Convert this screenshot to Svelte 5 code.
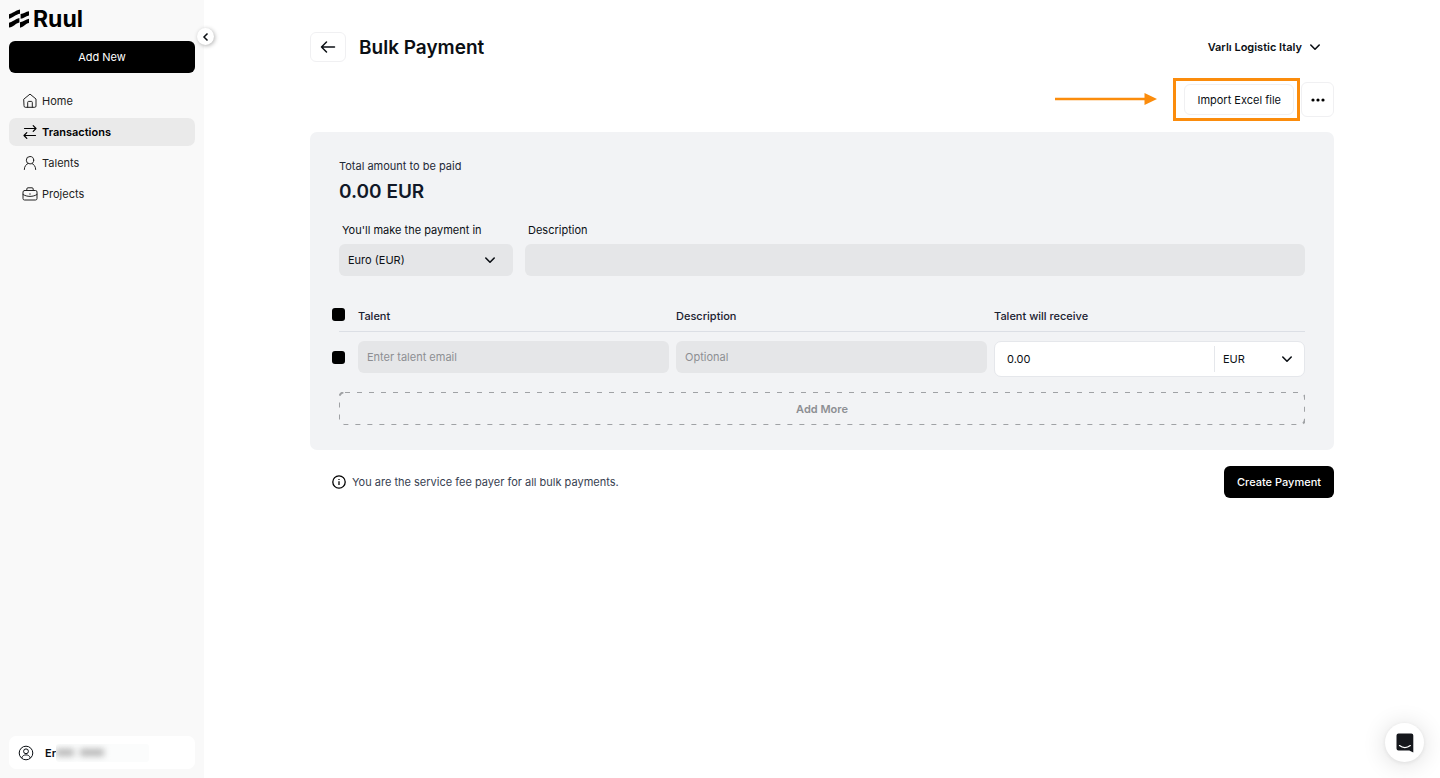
<script lang="ts">
	const navItems = [
		{ label: 'Home', icon: 'home', active: false },
		{ label: 'Transactions', icon: 'swap', active: true },
		{ label: 'Talents', icon: 'person', active: false },
		{ label: 'Projects', icon: 'briefcase', active: false }
	];

	const currencies = [
		{ code: 'EUR', name: 'Euro (EUR)' },
		{ code: 'USD', name: 'US Dollar (USD)' },
		{ code: 'GBP', name: 'British Pound (GBP)' }
	];

	let payCurrency = $state('EUR');
	let description = $state('');
	let rows = $state([{ id: 1, email: '', note: '', amount: '0.00', currency: 'EUR' }]);

	let total = $derived(rows.reduce((sum, row) => sum + (Number(row.amount) || 0), 0).toFixed(2));

	function addRow() {
		rows.push({ id: rows.length + 1, email: '', note: '', amount: '0.00', currency: payCurrency });
	}
</script>

{#snippet chevron()}
	<svg class="chevron" width="12" height="8" viewBox="0 0 12 8" aria-hidden="true">
		<path d="m1.800 2 4.200 4.200L10.200 2" />
	</svg>
{/snippet}

<div class="layout">
	<aside class="sidebar">
		<a class="logo" href="#home">
			<svg width="20" height="20" viewBox="0 0 20 20" aria-hidden="true">
				<path d="M0 5.200C4 4.600 6 1.500 11 .6v4.200C6.500 5.500 4.500 8.700 0 9.700Z" />
				<path d="M11.600 4.900C15 4.500 16.500 2.800 20 2.200v4.300c-3.500.6-5 2.800-8.400 3.300Z" />
				<path d="M0 13.700c4-.6 6-3.700 10.400-4.600v4.300C6.500 14.300 4.500 17.800 0 18.600Z" />
				<path d="M11 13.300c4-.7 5.500-3 9-3.600V14c-3.500.6-5 3.800-9 4.800Z" />
			</svg>
			<span>Ruul</span>
		</a>

		<button class="add-new" type="button">Add New</button>

		<nav>
			{#each navItems as item}
				<a href="#{item.icon}" class:active={item.active}>
					<svg width="16" height="16" viewBox="0 0 16 16" aria-hidden="true">
						{#if item.icon === 'home'}
							<path d="M2 6 8 1.100l6 4.900v7a1.300 1.300 0 0 1-1.300 1.300H3.300A1.300 1.300 0 0 1 2 13Z" />
							<path d="M5.700 14.300v-5q0-.9.9-.9h2.800q.9 0 .9.900v5" />
						{:else if item.icon === 'swap'}
							<path d="M2.500 4.500H14M11.200 1.700 14 4.500l-2.800 2.800M13.500 11.500H2M4.800 8.700 2 11.500l2.800 2.800" />
						{:else if item.icon === 'person'}
							<circle cx="8" cy="5.200" r="3.700" />
							<path d="M2.300 14.500C2.300 11 4.500 9.200 6 8.500M13.700 14.500c0-3.500-2.200-5.300-3.700-6" />
						{:else}
							<rect x="1" y="4.500" width="14" height="9.500" rx="1.500" />
							<path d="M4.800 4.500V3q0-1.200 1.200-1.200h4q1.200 0 1.200 1.200v1.500M1 8.500c4 2.600 10 2.600 14 0M7.700 8h.6" />
						{/if}
					</svg>
					{item.label}
				</a>
			{/each}
		</nav>

		<button class="user" type="button" aria-label="Account">
			<svg width="16" height="16" viewBox="0 0 16 16" aria-hidden="true">
				<circle cx="8" cy="8" r="6.800" />
				<circle cx="8" cy="6.300" r="2.400" />
				<path d="M3.700 13c.6-2.200 2.300-3.100 4.300-3.100s3.700.9 4.300 3.100" />
			</svg>
			<span class="name">Er</span>
			<span class="redacted"><i></i><i></i></span>
		</button>

		<button class="collapse" type="button" aria-label="Collapse sidebar">
			<svg width="8" height="10" viewBox="0 0 8 10" aria-hidden="true">
				<path d="M5.500 1.500 2 5l3.500 3.500" />
			</svg>
		</button>
	</aside>

	<main>
		<div class="content">
			<header>
				<button class="outlined back" type="button" aria-label="Back">
					<svg width="16" height="14" viewBox="0 0 16 14" aria-hidden="true">
						<path d="M14.500 7h-13M6.500 2l-5 5 5 5" />
					</svg>
				</button>
				<h1>Bulk Payment</h1>
				<button class="company" type="button">
					Varlı Logistic Italy
					{@render chevron()}
				</button>
			</header>

			<div class="toolbar">
				<div class="import">
					<svg class="arrow" width="102" height="12" viewBox="0 0 102 12" aria-hidden="true">
						<path d="M0 4.800h90v2.400H0zM89.500 0 102 6 89.500 12z" />
					</svg>
					<button class="outlined" type="button">Import Excel file</button>
				</div>
				<button class="outlined more" type="button" aria-label="More">
					<svg width="14" height="4" viewBox="0 0 14 4" aria-hidden="true">
						<circle cx="2" cy="2" r="1.600" />
						<circle cx="7" cy="2" r="1.600" />
						<circle cx="12" cy="2" r="1.600" />
					</svg>
				</button>
			</div>

			<section class="card">
				<p class="total-label">Total amount to be paid</p>
				<p class="total">{total} EUR</p>

				<div class="fields">
					<div class="field currency">
						<label for="pay-currency">You'll make the payment in</label>
						<div class="select">
							<select id="pay-currency" bind:value={payCurrency}>
								{#each currencies as c}
									<option value={c.code}>{c.name}</option>
								{/each}
							</select>
							{@render chevron()}
						</div>
					</div>
					<div class="field">
						<label for="description">Description</label>
						<input id="description" type="text" bind:value={description} />
					</div>
				</div>

				<table>
					<thead>
						<tr>
							<th><input type="checkbox" aria-label="Select all" /></th>
							<th>Talent</th>
							<th>Description</th>
							<th>Talent will receive</th>
						</tr>
					</thead>
					<tbody>
						{#each rows as row (row.id)}
							<tr>
								<td><input type="checkbox" aria-label="Select row" /></td>
								<td><input type="text" placeholder="Enter talent email" aria-label="Talent" bind:value={row.email} /></td>
								<td><input type="text" placeholder="Optional" aria-label="Description" bind:value={row.note} /></td>
								<td>
									<div class="amount">
										<input type="text" aria-label="Talent will receive" bind:value={row.amount} />
										<div class="select">
											<select aria-label="Currency" bind:value={row.currency}>
												{#each currencies as c}
													<option>{c.code}</option>
												{/each}
											</select>
											{@render chevron()}
										</div>
									</div>
								</td>
							</tr>
						{/each}
					</tbody>
				</table>

				<button class="add-more" type="button" onclick={addRow}>
					<svg aria-hidden="true"><rect width="100%" height="100%" rx="6" /></svg>
					Add More
				</button>
			</section>

			<footer>
				<p>
					<svg width="14" height="14" viewBox="0 0 14 14" aria-hidden="true">
						<circle cx="7" cy="7" r="6.200" />
						<path d="M7 6.300v3.700M7 4v1" />
					</svg>
					You are the service fee payer for all bulk payments.
				</p>
				<button class="create" type="button">Create Payment</button>
			</footer>
		</div>
	</main>

	<button class="chat" type="button" aria-label="Open chat">
		<svg width="18" height="20" viewBox="0 0 18 20" aria-hidden="true">
			<path d="M2.500.5h12.800q2 0 2 2v17l-4-2H2.500q-2 0-2-2v-13q0-2 2-2Z" />
			<path class="smile" d="M3.500 12.600c3.200 2.500 7.600 2.500 10.800 0" />
		</svg>
	</button>
</div>

<style>
	:global(body) {
		margin: 0;
		background: #fff;
	}

	.layout {
		display: flex;
		min-height: 100vh;
		font-family: Inter, 'Liberation Sans', sans-serif;
		font-size: 11px;
		line-height: 16px;
		color: #0b0f14;
	}

	.layout :global(*) {
		box-sizing: border-box;
	}

	button,
	input,
	select {
		margin: 0;
		border: 0;
		font: inherit;
		color: inherit;
	}

	button {
		display: flex;
		align-items: center;
		justify-content: center;
		padding: 0;
		background: none;
		cursor: pointer;
	}

	p,
	h1 {
		margin: 0;
	}

	svg {
		flex: none;
		fill: none;
		stroke: currentColor;
	}

	.chevron {
		stroke-width: 1.6;
		stroke-linecap: round;
		stroke-linejoin: round;
		pointer-events: none;
	}

	/* sidebar */
	.sidebar {
		position: relative;
		display: flex;
		flex-direction: column;
		flex: none;
		width: 204px;
		padding: 9px;
		background: #f9f9f9;
	}

	.logo {
		display: flex;
		align-items: center;
		gap: 4px;
		height: 20px;
		color: #000;
		font-size: 23px;
		font-weight: 700;
		line-height: 20px;
		text-decoration: none;
	}

	.logo svg {
		fill: currentColor;
		stroke: none;
	}

	.add-new {
		height: 32px;
		margin: 12px 0 14px;
		border-radius: 6px;
		background: #000;
		color: #fff;
	}

	nav {
		display: flex;
		flex-direction: column;
		gap: 3px;
	}

	nav a {
		display: flex;
		align-items: center;
		gap: 4px;
		height: 28px;
		padding: 0 13px;
		border-radius: 7px;
		color: #222;
		text-decoration: none;
	}

	nav a.active {
		background: #eaeaea;
		color: #000;
		font-weight: 600;
	}

	nav svg {
		stroke-linecap: round;
		stroke-linejoin: round;
	}

	nav a.active svg {
		stroke-width: 1.2;
	}

	.user {
		justify-content: flex-start;
		height: 33px;
		margin-top: auto;
		padding: 0 9px;
		border-radius: 7px;
		background: #fff;
		font-weight: 600;
	}

	.name {
		margin-left: 11px;
	}

	.redacted {
		display: flex;
		align-items: center;
		gap: 6px;
		width: 93px;
		height: 18px;
		overflow: hidden;
		border-radius: 3px;
		background: #fbfcfc;
	}

	.redacted i {
		width: 18px;
		height: 7px;
		background: #b4b4b4;
		filter: blur(3px);
	}

	.redacted i:last-child {
		width: 24px;
	}

	.collapse {
		position: absolute;
		top: 28px;
		right: -10px;
		width: 17px;
		height: 17px;
		border-radius: 50%;
		background: #fff;
		box-shadow: 1px 1px 4px rgba(0, 0, 0, 0.3);
	}

	.collapse svg {
		stroke-width: 1.5;
	}

	/* page */
	main {
		flex: 1;
		min-width: 0;
		padding: 32px 24px;
	}

	.content {
		max-width: 1024px;
		margin: 0 auto;
	}

	header {
		display: flex;
		align-items: center;
	}

	.outlined {
		border: 1px solid #f0f0f2;
		border-radius: 6px;
		background: #fff;
	}

	.back {
		width: 36px;
		height: 30px;
	}

	.back svg {
		stroke-width: 1.5;
		stroke-linecap: round;
		stroke-linejoin: round;
	}

	h1 {
		margin-left: 13px;
		padding-top: 2px;
		font-size: 19px;
		font-weight: 600;
		line-height: 24px;
	}

	.company {
		gap: 7px;
		margin-left: auto;
		padding-right: 13px;
		font-weight: 600;
	}

	.toolbar {
		display: flex;
		align-items: center;
		justify-content: flex-end;
		gap: 1px;
		margin: 16px 0 11px;
	}

	.import {
		position: relative;
		padding: 3px 3px 3px 8px;
		border: 3px solid #fb8c0c;
	}

	.import .outlined {
		height: 31px;
		padding: 0 12px;
	}

	.arrow {
		position: absolute;
		top: 12px;
		right: 100%;
		margin-right: 19px;
		fill: #fb8c0c;
		stroke: none;
	}

	.more {
		width: 33px;
		height: 35px;
	}

	.more svg {
		fill: #000;
		stroke: none;
	}

	.card {
		padding: 26px 29px 25px;
		border-radius: 7px;
		background: #f2f3f5;
	}

	.total-label {
		color: #1f2937;
	}

	.total {
		margin-top: 6px;
		color: #111827;
		font-size: 19px;
		font-weight: 600;
		line-height: 24px;
	}

	.fields {
		display: flex;
		gap: 12px;
		margin-top: 18px;
	}

	.field {
		display: flex;
		flex: 1;
		flex-direction: column;
		gap: 6px;
	}

	.field.currency {
		flex: 0 0 174px;
	}

	.field label {
		padding-left: 3px;
	}

	input[type='text'] {
		width: 100%;
		height: 32px;
		padding: 0 9px;
		border-radius: 6px;
		background: #e5e6e8;
		outline: none;
	}

	input::placeholder {
		color: #8d8f93;
		opacity: 1;
	}

	.select {
		position: relative;
		display: flex;
		align-items: center;
	}

	.select select {
		width: 100%;
		height: 32px;
		padding: 0 9px;
		border-radius: 6px;
		background: #e5e6e8;
		appearance: none;
		outline: none;
	}

	.select .chevron {
		position: absolute;
		right: 17px;
	}

	table {
		display: block;
		margin-top: 30px;
	}

	thead,
	tbody {
		display: block;
	}

	tr {
		display: grid;
		grid-template-columns: 12px 1fr 1fr 1fr;
		gap: 7px;
	}

	thead tr {
		height: 26px;
		border-bottom: 1px solid #dcdfe5;
	}

	tbody tr {
		padding-top: 9px;
	}

	th,
	td {
		padding: 0;
		text-align: left;
	}

	th {
		padding-top: 2px;
		color: #1a2130;
		font-weight: 500;
	}

	input[type='checkbox'] {
		display: block;
		width: 13px;
		height: 13px;
		margin-left: -7px;
		border-radius: 3px;
		background: #000;
		appearance: none;
	}

	td input[type='checkbox'] {
		margin-top: 10px;
	}

	.amount {
		display: flex;
		align-items: center;
		height: 36px;
		border: 1px solid #e5e7eb;
		border-radius: 7px;
		background: #fff;
	}

	.amount input[type='text'] {
		flex: 1;
		min-width: 0;
		padding: 0 12px;
		background: none;
	}

	.amount .select {
		flex: 0 0 90px;
		border-left: 1px solid #e5e7eb;
	}

	.amount .select select {
		height: 26px;
		padding: 0 8px;
		background: none;
	}

	.amount .chevron {
		right: 11px;
	}

	.add-more {
		position: relative;
		width: 100%;
		height: 33px;
		margin-top: 15px;
		color: #8d8f93;
		font-weight: 600;
	}

	.add-more svg {
		position: absolute;
		inset: 0;
		width: 100%;
		height: 100%;
		overflow: hidden;
		stroke: #a0a2a5;
		stroke-width: 2;
		stroke-dasharray: 5 7;
	}

	footer {
		display: flex;
		align-items: center;
		justify-content: space-between;
		margin-top: 16px;
	}

	footer p {
		display: flex;
		align-items: center;
		gap: 6px;
		padding-left: 22px;
		color: #374151;
	}

	footer svg {
		color: #000;
		stroke-width: 1.3;
	}

	.create {
		height: 32px;
		padding: 0 13px;
		border-radius: 6px;
		background: #000;
		color: #fff;
		font-weight: 500;
	}

	.chat {
		position: fixed;
		right: 16px;
		bottom: 16px;
		width: 39px;
		height: 39px;
		border-radius: 50%;
		background: #fff;
		box-shadow: 0 1px 5px rgba(0, 0, 0, 0.08), 0 2px 24px rgba(0, 0, 0, 0.14);
	}

	.chat svg {
		fill: #15171c;
		stroke: none;
	}

	.chat .smile {
		fill: none;
		stroke: #fff;
		stroke-width: 1.3;
		stroke-linecap: round;
	}
</style>
